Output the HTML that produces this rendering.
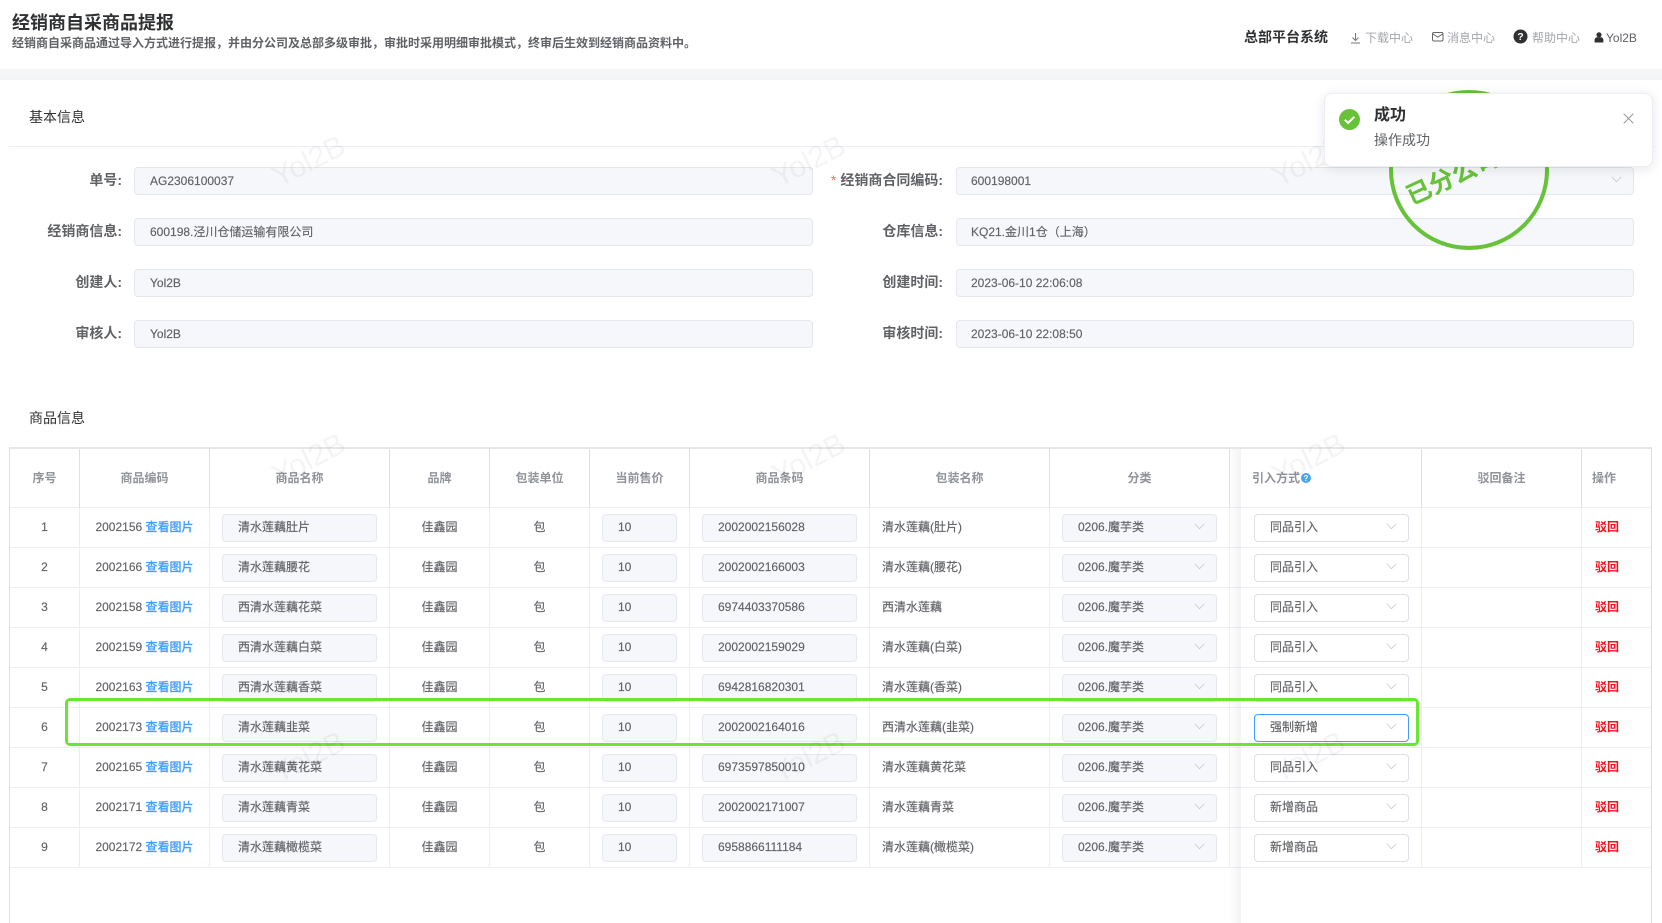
<!DOCTYPE html>
<html lang="zh-CN">
<head>
<meta charset="utf-8">
<title>经销商自采商品提报</title>
<style>
html,body{margin:0;padding:0;background:#fff;}
body{width:1662px;height:923px;overflow:hidden;position:relative;font-family:"Liberation Sans","Noto Sans CJK SC",sans-serif;font-size:12px;color:#606266;}
.a{position:absolute;white-space:nowrap;}
.band{left:0;top:69px;width:1662px;height:11px;background:linear-gradient(#f6f7f8,#f2f3f5);}
.lbl{font-size:14px;font-weight:700;color:#606266;text-align:right;line-height:27px;width:130px;}
.fi{box-sizing:border-box;height:28px;background:#f5f7fa;border:1px solid #e4e7ed;border-radius:4px;line-height:26px;padding-left:15px;font-size:12px;color:#606266;-webkit-text-stroke:.15px #606266;}
.fr{padding-left:14px;}
.tb{left:9px;top:447px;width:1643px;height:476px;border-left:1px solid #dcdfe6;border-right:1px solid #dcdfe6;border-top:2px solid #e4e6ea;box-sizing:border-box;}
table{border-collapse:separate;border-spacing:0;table-layout:fixed;width:1641px;}
th{padding:0 0 2px;box-sizing:border-box;height:59px;font-size:12px;font-weight:700;color:#909399;text-align:center;border-right:1px solid #dcdfe6;border-bottom:1px solid #ebeef5;}
td{height:40px;padding:0;box-sizing:border-box;font-size:12px;color:#606266;text-align:center;border-right:1px solid #ebeef5;border-bottom:1px solid #ebeef5;position:relative;white-space:nowrap;line-height:37px;-webkit-text-stroke:.15px #606266;}
th.n,td.n{border-right:0;}
td.l{text-align:left;padding-left:12px;}
td.o{padding-left:13px;}
th.l{text-align:left;padding-left:11px;}
th.o{padding-left:10px;}
td a{color:#409eff;text-decoration:none;font-weight:500;-webkit-text-stroke:.15px #409eff;}
td .i{position:absolute;top:6px;left:12px;box-sizing:border-box;height:28px;background:#f5f7fa;border:1px solid #e4e7ed;border-radius:4px;line-height:25px;padding-left:15px;text-align:left;}
td .s{background:#fff;border-color:#dcdfe6;}
td .f{border-color:#409eff;background:#fff;}
td svg,.fi svg{position:absolute;right:11px;top:8px;width:11px;height:7px;}
.r{color:#f5121d;font-weight:700;-webkit-text-stroke:0;}
.wm{font-size:30px;color:rgba(0,0,0,.045);transform:translate(-50%,-50%) rotate(-27deg);line-height:1;z-index:8;pointer-events:none;}
.shade{left:1229px;top:449px;width:12px;height:474px;background:linear-gradient(to right,rgba(0,0,0,0),rgba(0,0,0,.05));}
.hl{left:65px;top:698px;width:1354px;height:48px;box-sizing:border-box;border:3px solid #69e62f;border-radius:5px;z-index:5;}
.stamp{left:1389px;top:90px;width:160px;height:160px;box-sizing:border-box;border:4.5px solid #67c23a;border-radius:50%;z-index:6;}
.stxt{left:1408px;top:183px;font-size:25px;font-weight:700;color:#67c23a;transform:rotate(-25deg);transform-origin:left center;line-height:30px;letter-spacing:0;z-index:6;}
.note{left:1324px;top:93px;width:329px;height:74px;box-sizing:border-box;background:#fff;border:1px solid #ebeef5;border-radius:8px;box-shadow:0 2px 12px rgba(0,0,0,.1);z-index:10;}
</style>
</head>
<body>
<div class="a" style="left:12px;top:10px;font-size:18px;font-weight:700;color:#303133;line-height:26px;">经销商自采商品提报</div>
<div class="a" style="left:12px;top:35px;font-size:12px;font-weight:700;color:#606266;line-height:17px;">经销商自采商品通过导入方式进行提报，并由分公司及总部多级审批，审批时采用明细审批模式，终审后生效到经销商品资料中。</div>

<div class="a" style="left:1244px;top:27px;font-size:14px;font-weight:700;color:#303133;line-height:20px;">总部平台系统</div>
<svg class="a" style="left:1350px;top:32px;" width="11" height="12" viewBox="0 0 11 12" fill="none" stroke="#777" stroke-width="1"><path d="M5.5 1v7M2.5 5.5l3 3 3-3M1 11h9"/></svg>
<div class="a" style="left:1365px;top:30px;color:#a3a6ab;line-height:17px;">下载中心</div>
<svg class="a" style="left:1432px;top:32px;" width="12" height="10" viewBox="0 0 12 10" fill="none" stroke="#666" stroke-width="1"><rect x=".5" y=".5" width="10.5" height="8.5" rx="1.5"/><path d="M1 2l4.8 3.2L10.6 2"/></svg>
<div class="a" style="left:1447px;top:30px;color:#a3a6ab;line-height:17px;">消息中心</div>
<svg class="a" style="left:1513px;top:29px;" width="15" height="15" viewBox="0 0 15 15"><circle cx="7.5" cy="7.5" r="7" fill="#303133"/><text x="7.5" y="11.2" text-anchor="middle" font-size="10.5" font-weight="700" fill="#fff" font-family="Liberation Sans">?</text></svg>
<div class="a" style="left:1532px;top:30px;color:#a3a6ab;line-height:17px;">帮助中心</div>
<svg class="a" style="left:1594px;top:32px;" width="10" height="11" viewBox="0 0 10 11" fill="#303133"><circle cx="5" cy="2.8" r="2.6"/><path d="M.6 10.5V8c0-1.8 1.4-2.8 2.6-2.8h3.6c1.2 0 2.6 1 2.6 2.8v2.5z"/></svg>
<div class="a" style="left:1606px;top:30px;color:#606266;line-height:17px;">Yol2B</div>

<div class="a band"></div>

<div class="a" style="left:29px;top:107px;font-size:14px;color:#303133;line-height:20px;">基本信息</div>
<div class="a" style="left:9px;top:146px;width:1645px;height:1px;background:#ebeef5;"></div>

<div class="a lbl" style="left:-8px;top:167px;">单号:</div>
<div class="a fi" style="left:134px;top:167px;width:679px;">AG2306100037</div>
<div class="a lbl" style="left:-8px;top:218px;">经销商信息:</div>
<div class="a fi" style="left:134px;top:218px;width:679px;">600198.泾川仓储运输有限公司</div>
<div class="a lbl" style="left:-8px;top:269px;">创建人:</div>
<div class="a fi" style="left:134px;top:269px;width:679px;">Yol2B</div>
<div class="a lbl" style="left:-8px;top:320px;">审核人:</div>
<div class="a fi" style="left:134px;top:320px;width:679px;">Yol2B</div>

<div class="a lbl" style="left:813px;top:167px;"><span style="color:#f56c6c;font-weight:400;margin-right:4px;">*</span>经销商合同编码:</div>
<div class="a fi fr" style="left:956px;top:167px;width:678px;">600198001<svg viewBox="0 0 12 8" fill="none" stroke="#c0c4cc" stroke-width=".8" style="top:8px;right:11px;"><path d="M.7 1l5.3 5.5L11.3 1"/></svg></div>
<div class="a lbl" style="left:813px;top:218px;">仓库信息:</div>
<div class="a fi fr" style="left:956px;top:218px;width:678px;">KQ21.金川1仓（上海）</div>
<div class="a lbl" style="left:813px;top:269px;">创建时间:</div>
<div class="a fi fr" style="left:956px;top:269px;width:678px;">2023-06-10 22:06:08</div>
<div class="a lbl" style="left:813px;top:320px;">审核时间:</div>
<div class="a fi fr" style="left:956px;top:320px;width:678px;">2023-06-10 22:08:50</div>

<div class="a" style="left:29px;top:408px;font-size:14px;color:#303133;line-height:20px;">商品信息</div>

<div class="a tb">
<table>
<colgroup><col style="width:70px"><col style="width:130px"><col style="width:180px"><col style="width:100px"><col style="width:100px"><col style="width:100px"><col style="width:180px"><col style="width:180px"><col style="width:180px"><col style="width:11px"><col style="width:181px"><col style="width:160px"><col style="width:69px"></colgroup>
<tr><th>序号</th><th>商品编码</th><th>商品名称</th><th>品牌</th><th>包装单位</th><th>当前售价</th><th>商品条码</th><th>包装名称</th><th>分类</th><th class="n"></th><th class="l">引入方式<svg width="10" height="10" viewBox="0 0 10 10" style="vertical-align:-1px;margin-left:1px;"><circle cx="5" cy="5" r="5" fill="#4aa3ef"/><text x="5" y="8" text-anchor="middle" font-size="8" font-weight="700" fill="#fff" font-family="Liberation Sans">?</text></svg></th><th>驳回备注</th><th class="l o n">操作</th></tr>
<tr><td>1</td><td>2002156 <a>查看图片</a></td><td><div class="i" style="width:155px">清水莲藕肚片</div></td><td>佳鑫园</td><td>包</td><td><div class="i" style="width:75px">10</div></td><td><div class="i" style="width:155px">2002002156028</div></td><td class="l">清水莲藕(肚片)</td><td><div class="i" style="width:155px">0206.魔芋类<svg viewBox="0 0 12 8" fill="none" stroke="#c0c4cc" stroke-width=".8"><path d="M.7 1l5.3 5.5L11.3 1"/></svg></div></td><td class="n"></td><td><div class="i s" style="left:13px;width:155px">同品引入<svg viewBox="0 0 12 8" fill="none" stroke="#c0c4cc" stroke-width=".8"><path d="M.7 1l5.3 5.5L11.3 1"/></svg></div></td><td></td><td class="l o n"><span class="r">驳回</span></td></tr>
<tr><td>2</td><td>2002166 <a>查看图片</a></td><td><div class="i" style="width:155px">清水莲藕腰花</div></td><td>佳鑫园</td><td>包</td><td><div class="i" style="width:75px">10</div></td><td><div class="i" style="width:155px">2002002166003</div></td><td class="l">清水莲藕(腰花)</td><td><div class="i" style="width:155px">0206.魔芋类<svg viewBox="0 0 12 8" fill="none" stroke="#c0c4cc" stroke-width=".8"><path d="M.7 1l5.3 5.5L11.3 1"/></svg></div></td><td class="n"></td><td><div class="i s" style="left:13px;width:155px">同品引入<svg viewBox="0 0 12 8" fill="none" stroke="#c0c4cc" stroke-width=".8"><path d="M.7 1l5.3 5.5L11.3 1"/></svg></div></td><td></td><td class="l o n"><span class="r">驳回</span></td></tr>
<tr><td>3</td><td>2002158 <a>查看图片</a></td><td><div class="i" style="width:155px">西清水莲藕花菜</div></td><td>佳鑫园</td><td>包</td><td><div class="i" style="width:75px">10</div></td><td><div class="i" style="width:155px">6974403370586</div></td><td class="l">西清水莲藕</td><td><div class="i" style="width:155px">0206.魔芋类<svg viewBox="0 0 12 8" fill="none" stroke="#c0c4cc" stroke-width=".8"><path d="M.7 1l5.3 5.5L11.3 1"/></svg></div></td><td class="n"></td><td><div class="i s" style="left:13px;width:155px">同品引入<svg viewBox="0 0 12 8" fill="none" stroke="#c0c4cc" stroke-width=".8"><path d="M.7 1l5.3 5.5L11.3 1"/></svg></div></td><td></td><td class="l o n"><span class="r">驳回</span></td></tr>
<tr><td>4</td><td>2002159 <a>查看图片</a></td><td><div class="i" style="width:155px">西清水莲藕白菜</div></td><td>佳鑫园</td><td>包</td><td><div class="i" style="width:75px">10</div></td><td><div class="i" style="width:155px">2002002159029</div></td><td class="l">清水莲藕(白菜)</td><td><div class="i" style="width:155px">0206.魔芋类<svg viewBox="0 0 12 8" fill="none" stroke="#c0c4cc" stroke-width=".8"><path d="M.7 1l5.3 5.5L11.3 1"/></svg></div></td><td class="n"></td><td><div class="i s" style="left:13px;width:155px">同品引入<svg viewBox="0 0 12 8" fill="none" stroke="#c0c4cc" stroke-width=".8"><path d="M.7 1l5.3 5.5L11.3 1"/></svg></div></td><td></td><td class="l o n"><span class="r">驳回</span></td></tr>
<tr><td>5</td><td>2002163 <a>查看图片</a></td><td><div class="i" style="width:155px">西清水莲藕香菜</div></td><td>佳鑫园</td><td>包</td><td><div class="i" style="width:75px">10</div></td><td><div class="i" style="width:155px">6942816820301</div></td><td class="l">清水莲藕(香菜)</td><td><div class="i" style="width:155px">0206.魔芋类<svg viewBox="0 0 12 8" fill="none" stroke="#c0c4cc" stroke-width=".8"><path d="M.7 1l5.3 5.5L11.3 1"/></svg></div></td><td class="n"></td><td><div class="i s" style="left:13px;width:155px">同品引入<svg viewBox="0 0 12 8" fill="none" stroke="#c0c4cc" stroke-width=".8"><path d="M.7 1l5.3 5.5L11.3 1"/></svg></div></td><td></td><td class="l o n"><span class="r">驳回</span></td></tr>
<tr><td>6</td><td>2002173 <a>查看图片</a></td><td><div class="i" style="width:155px">清水莲藕韭菜</div></td><td>佳鑫园</td><td>包</td><td><div class="i" style="width:75px">10</div></td><td><div class="i" style="width:155px">2002002164016</div></td><td class="l">西清水莲藕(韭菜)</td><td><div class="i" style="width:155px">0206.魔芋类<svg viewBox="0 0 12 8" fill="none" stroke="#c0c4cc" stroke-width=".8"><path d="M.7 1l5.3 5.5L11.3 1"/></svg></div></td><td class="n"></td><td><div class="i f" style="left:13px;width:155px">强制新增<svg viewBox="0 0 12 8" fill="none" stroke="#c0c4cc" stroke-width=".8"><path d="M.7 1l5.3 5.5L11.3 1"/></svg></div></td><td></td><td class="l o n"><span class="r">驳回</span></td></tr>
<tr><td>7</td><td>2002165 <a>查看图片</a></td><td><div class="i" style="width:155px">清水莲藕黄花菜</div></td><td>佳鑫园</td><td>包</td><td><div class="i" style="width:75px">10</div></td><td><div class="i" style="width:155px">6973597850010</div></td><td class="l">清水莲藕黄花菜</td><td><div class="i" style="width:155px">0206.魔芋类<svg viewBox="0 0 12 8" fill="none" stroke="#c0c4cc" stroke-width=".8"><path d="M.7 1l5.3 5.5L11.3 1"/></svg></div></td><td class="n"></td><td><div class="i s" style="left:13px;width:155px">同品引入<svg viewBox="0 0 12 8" fill="none" stroke="#c0c4cc" stroke-width=".8"><path d="M.7 1l5.3 5.5L11.3 1"/></svg></div></td><td></td><td class="l o n"><span class="r">驳回</span></td></tr>
<tr><td>8</td><td>2002171 <a>查看图片</a></td><td><div class="i" style="width:155px">清水莲藕青菜</div></td><td>佳鑫园</td><td>包</td><td><div class="i" style="width:75px">10</div></td><td><div class="i" style="width:155px">2002002171007</div></td><td class="l">清水莲藕青菜</td><td><div class="i" style="width:155px">0206.魔芋类<svg viewBox="0 0 12 8" fill="none" stroke="#c0c4cc" stroke-width=".8"><path d="M.7 1l5.3 5.5L11.3 1"/></svg></div></td><td class="n"></td><td><div class="i s" style="left:13px;width:155px">新增商品<svg viewBox="0 0 12 8" fill="none" stroke="#c0c4cc" stroke-width=".8"><path d="M.7 1l5.3 5.5L11.3 1"/></svg></div></td><td></td><td class="l o n"><span class="r">驳回</span></td></tr>
<tr><td>9</td><td>2002172 <a>查看图片</a></td><td><div class="i" style="width:155px">清水莲藕橄榄菜</div></td><td>佳鑫园</td><td>包</td><td><div class="i" style="width:75px">10</div></td><td><div class="i" style="width:155px">6958866111184</div></td><td class="l">清水莲藕(橄榄菜)</td><td><div class="i" style="width:155px">0206.魔芋类<svg viewBox="0 0 12 8" fill="none" stroke="#c0c4cc" stroke-width=".8"><path d="M.7 1l5.3 5.5L11.3 1"/></svg></div></td><td class="n"></td><td><div class="i s" style="left:13px;width:155px">新增商品<svg viewBox="0 0 12 8" fill="none" stroke="#c0c4cc" stroke-width=".8"><path d="M.7 1l5.3 5.5L11.3 1"/></svg></div></td><td></td><td class="l o n"><span class="r">驳回</span></td></tr>
</table>
</div>
<div class="a shade"></div>
<div class="a hl"></div>

<div class="a wm" style="left:309px;top:162px;">Yol2B</div>
<div class="a wm" style="left:809px;top:162px;">Yol2B</div>
<div class="a wm" style="left:1309px;top:162px;">Yol2B</div>
<div class="a wm" style="left:309px;top:460px;">Yol2B</div>
<div class="a wm" style="left:809px;top:460px;">Yol2B</div>
<div class="a wm" style="left:1309px;top:460px;">Yol2B</div>
<div class="a wm" style="left:309px;top:758px;">Yol2B</div>
<div class="a wm" style="left:809px;top:758px;">Yol2B</div>
<div class="a wm" style="left:1309px;top:758px;">Yol2B</div>

<div class="a stamp"></div>
<div class="a stxt">已分公司</div>

<div class="a note">
  <svg class="a" style="left:14px;top:14.5px;" width="21" height="21" viewBox="0 0 21 21"><circle cx="10.5" cy="10.5" r="10.5" fill="#67c23a"/><path d="M5.8 10.8l3.3 3.2 6.2-6.2" fill="none" stroke="#fff" stroke-width="2"/></svg>
  <div class="a" style="left:49px;top:10px;font-size:16px;font-weight:700;color:#303133;line-height:24px;">成功</div>
  <div class="a" style="left:49px;top:36px;font-size:14px;color:#606266;line-height:21px;">操作成功</div>
  <svg class="a" style="left:298px;top:19px;" width="11" height="11" viewBox="0 0 11 11" fill="none" stroke="#909399" stroke-width="1"><path d="M.7.7l9.6 9.6M10.3.7L.7 10.3"/></svg>
</div>
</body>
</html>
